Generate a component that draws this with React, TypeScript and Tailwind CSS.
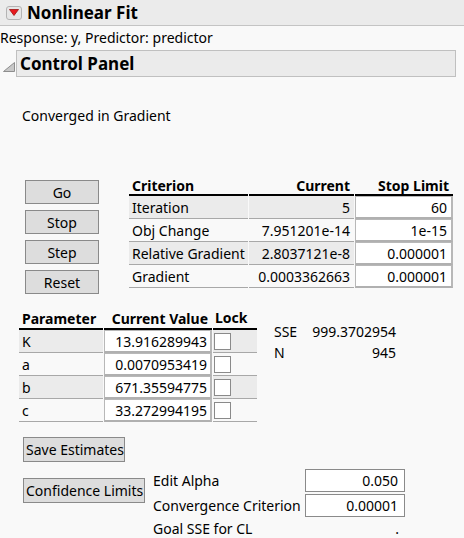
import React from "react";

const font = { fontFamily: '"Noto Sans", "Open Sans", Arial, sans-serif' };

function Btn({ label, w, h = "h-[24px]" }: { label: string; w: string; h?: string }) {
  return (
    <div className={`${w} ${h} flex items-center justify-center bg-[#dddddd] border border-[#8a8a8a] text-[14px]`}>{label}</div>
  );
}

export default function App() {
  const crit = [
    ["Iteration", "5", "60"],
    ["Obj Change", "7.951201e-14", "1e-15"],
    ["Relative Gradient", "2.8037121e-8", "0.000001"],
    ["Gradient", "0.0003362663", "0.000001"],
  ];
  const params = [
    ["K", "13.916289943"],
    ["a", "0.0070953419"],
    ["b", "671.35594775"],
    ["c", "33.272994195"],
  ];
  return (
    <div className="w-[464px] h-[538px] bg-[#f9f9f9] overflow-hidden text-black text-[14px]" style={font}>
      {/* header */}
      <div className="h-[26px] bg-[#ebebeb] border-b border-[#c4c4c4] flex items-center">
        <div className="ml-[6px] w-[16px] h-[14px] rounded-[3px] border border-[#b4b4b4] bg-[#e6e6e6] flex items-center justify-center">
          <svg width="10" height="7" viewBox="0 0 10 7">
            <polygon points="0.5,0.5 9.5,0.5 5,6.5" fill="#e8191e" stroke="#a01010" strokeWidth="0.8" />
          </svg>
        </div>
        <span className="ml-[5px] text-[17px] font-bold leading-none">Nonlinear Fit</span>
      </div>
      <div className="h-[24px] flex items-center leading-none">Response: y, Predictor: predictor</div>
      {/* control panel header */}
      <div className="flex items-center h-[27px]">
        <svg className="ml-[3px] mt-[6px]" width="12" height="10" viewBox="0 0 12 10">
          <polygon points="0.5,9.5 11.5,9.5 11.5,0.5" fill="#c8c8c8" stroke="#8e8e8e" strokeWidth="1" />
        </svg>
        <div className="ml-[1px] mr-[8px] flex-1 h-[27px] bg-[#ebebeb] border border-[#c0c0c0] flex items-center pl-[3px]">
          <span className="text-[17px] font-bold leading-none">Control Panel</span>
        </div>
      </div>
      <div className="mt-[30px] ml-[22px] leading-[18px]">Converged in Gradient</div>

      {/* buttons + criterion */}
      <div className="mt-[53px] ml-[25px] flex items-start">
        <div className="mt-[2px] flex flex-col gap-[6px]">
          <Btn label="Go" w="w-[74px]" />
          <Btn label="Stop" w="w-[74px]" />
          <Btn label="Step" w="w-[74px]" />
          <Btn label="Reset" w="w-[74px]" />
        </div>
        <div className="ml-[30px] grid grid-cols-[119px_105px_98px] gap-x-[1px]">
          <div className="h-[18px] border-b-2 border-black font-bold leading-[15px] pl-[3px]">Criterion</div>
          <div className="h-[18px] border-b-2 border-black font-bold leading-[15px] text-right pr-[4px]">Current</div>
          <div className="h-[18px] border-b-2 border-black font-bold leading-[15px] text-right pr-[4px]">Stop Limit</div>
          {crit.map((r, i) => (
            <React.Fragment key={r[0]}>
              <div className={`h-[23px] border-b border-[#a8a8a8] flex items-center pl-[3px] ${i % 2 === 0 ? "bg-[#ebebeb]" : ""}`}>{r[0]}</div>
              <div className={`h-[23px] border-b border-[#a8a8a8] flex items-center justify-end pr-[4px] ${i % 2 === 0 ? "bg-[#ebebeb]" : ""}`}>{r[1]}</div>
              <div className="h-[23px] bg-white border border-[#b8b8b8] border-b-2 border-r-2 border-b-[#b0b0b0] flex items-center justify-end pr-[4px]">{r[2]}</div>
            </React.Fragment>
          ))}
        </div>
      </div>

      {/* parameter table + SSE */}
      <div className="mt-[16px] ml-[19px] flex items-start">
        <div className="grid grid-cols-[84px_108px_44px] gap-x-[1px]">
          <div className="h-[20px] border-b-2 border-black font-bold leading-[17px] pl-[3px]">Parameter</div>
          <div className="h-[20px] border-b-2 border-black font-bold leading-[17px] text-right pr-[4px]">Current Value</div>
          <div className="h-[20px] border-b-2 border-black font-bold leading-[15px] pl-[2px]">Lock</div>
          {params.map((r, i) => (
            <React.Fragment key={r[0]}>
              <div className={`h-[23px] border-b border-[#a8a8a8] flex items-center pl-[3px] ${i % 2 === 0 ? "bg-[#ebebeb]" : ""}`}>{r[0]}</div>
              <div className="h-[23px] bg-white border border-[#b8b8b8] border-b-2 border-r-2 border-b-[#b0b0b0] flex items-center justify-end pr-[3px]">{r[1]}</div>
              <div className={`h-[23px] border-b border-[#a8a8a8] flex items-center pl-[1px] ${i % 2 === 0 ? "bg-[#ebebeb]" : ""}`}>
                <div className="w-[17px] h-[17px] bg-white border border-[#8a8a8a]" />
              </div>
            </React.Fragment>
          ))}
        </div>
        <div className="ml-[17px] mt-[11px] grid grid-cols-[auto_1fr] w-[122px] leading-[21px]">
          <span>SSE</span>
          <span className="text-right">999.3702954</span>
          <span>N</span>
          <span className="text-right">945</span>
        </div>
      </div>

      {/* save estimates */}
      <div className="mt-[15px] ml-[23px]">
        <div className="w-[102px] h-[25px] flex items-center pl-[2px] bg-[#dddddd] border border-[#8a8a8a]">Save Estimates</div>
      </div>

      <div className="mt-[7px] ml-[23px] flex items-start">
        <div className="mt-[9px] w-[122px] h-[25px] flex items-center pl-[2px] bg-[#dddddd] border border-[#8a8a8a]">Confidence Limits</div>
        <div className="ml-[8px] grid grid-cols-[152px_100px] gap-y-[2px]">
          <div className="h-[23px] flex items-center">Edit Alpha</div>
          <div className="h-[23px] bg-white border border-[#8a8a8a] flex items-center justify-end pr-[6px]">0.050</div>
          <div className="h-[23px] flex items-center">Convergence Criterion</div>
          <div className="h-[23px] bg-white border border-[#8a8a8a] flex items-center justify-end pr-[6px]">0.00001</div>
          <div className="h-[19px] flex items-center">Goal SSE for CL</div>
          <div className="h-[19px] flex items-center justify-end pr-[6px]">.</div>
        </div>
      </div>
    </div>
  );
}
